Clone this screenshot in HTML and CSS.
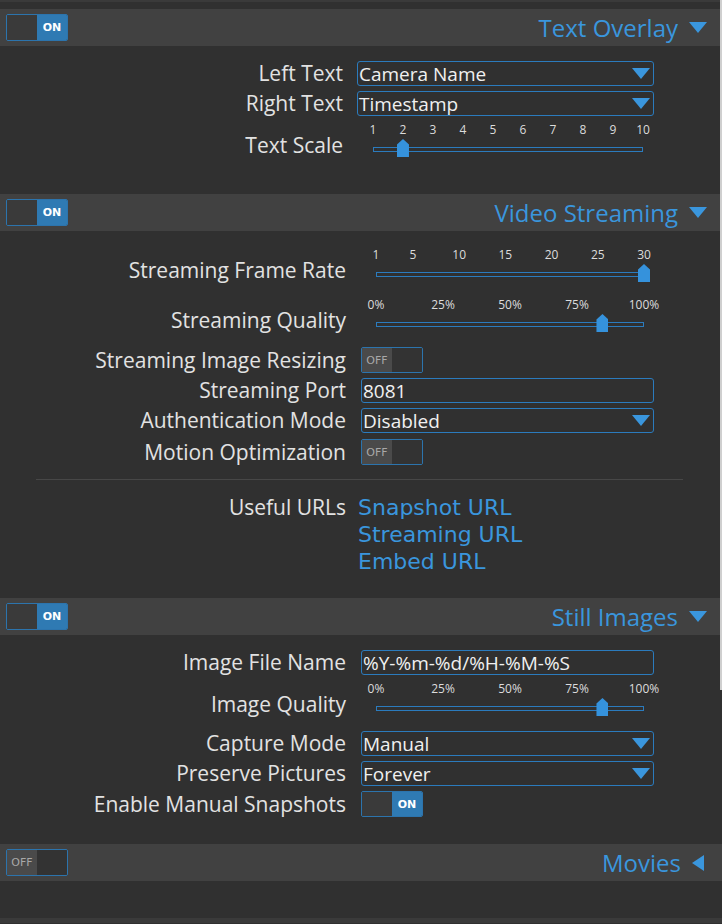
FILE: index.html
```html
<!DOCTYPE html>
<html>
<head>
<meta charset="utf-8">
<link rel="stylesheet" href="styles.css">
</head>
<body>
<div class="topline"></div>
<div class="gapline"></div>

<section class="sec">
  <div class="hdr">
    <div class="tog on big"><span class="a"></span><span class="b">ON</span></div>
    <div class="title">Text Overlay<span class="tri down"></span></div>
  </div>
  <div class="body b1">
    <div class="row"><div class="lbl">Left Text</div><div class="ctl"><div class="sel">Camera Name<span class="tri down sm"></span></div></div></div>
    <div class="row mt5"><div class="lbl">Right Text</div><div class="ctl"><div class="sel">Timestamp<span class="tri down sm"></span></div></div></div>
    <div class="row srow mt7"><div class="lbl">Text Scale</div><div class="ctl">
      <div class="slider s1">
        <span class="tick" style="left:0%">1</span>
        <span class="tick" style="left:11.11%">2</span>
        <span class="tick" style="left:22.22%">3</span>
        <span class="tick" style="left:33.33%">4</span>
        <span class="tick" style="left:44.44%">5</span>
        <span class="tick" style="left:55.56%">6</span>
        <span class="tick" style="left:66.67%">7</span>
        <span class="tick" style="left:77.78%">8</span>
        <span class="tick" style="left:88.89%">9</span>
        <span class="tick" style="left:100%">10</span>
        <div class="track"></div>
        <div class="handle" style="left:11.11%"></div>
      </div>
    </div></div>
  </div>
</section>

<section class="sec">
  <div class="hdr">
    <div class="tog on big"><span class="a"></span><span class="b">ON</span></div>
    <div class="title">Video Streaming<span class="tri down"></span></div>
  </div>
  <div class="body b2">
    <div class="row srow"><div class="lbl">Streaming Frame Rate</div><div class="ctl">
      <div class="slider">
        <span class="tick" style="left:0%">1</span>
        <span class="tick" style="left:13.79%">5</span>
        <span class="tick" style="left:31.03%">10</span>
        <span class="tick" style="left:48.28%">15</span>
        <span class="tick" style="left:65.52%">20</span>
        <span class="tick" style="left:82.76%">25</span>
        <span class="tick" style="left:100%">30</span>
        <div class="track"></div>
        <div class="handle" style="left:100%"></div>
      </div>
    </div></div>
    <div class="row srow mt14"><div class="lbl">Streaming Quality</div><div class="ctl">
      <div class="slider">
        <span class="tick" style="left:0%">0%</span>
        <span class="tick" style="left:25%">25%</span>
        <span class="tick" style="left:50%">50%</span>
        <span class="tick" style="left:75%">75%</span>
        <span class="tick" style="left:100%">100%</span>
        <div class="track"></div>
        <div class="handle" style="left:84.5%"></div>
      </div>
    </div></div>
    <div class="row mt13"><div class="lbl">Streaming Image Resizing</div><div class="ctl"><div class="tog off"><span class="a">OFF</span><span class="b"></span></div></div></div>
    <div class="row mt5"><div class="lbl">Streaming Port</div><div class="ctl"><div class="sel">8081</div></div></div>
    <div class="row mt5"><div class="lbl">Authentication Mode</div><div class="ctl"><div class="sel">Disabled<span class="tri down sm"></span></div></div></div>
    <div class="row mt6"><div class="lbl">Motion Optimization</div><div class="ctl"><div class="tog off"><span class="a">OFF</span><span class="b"></span></div></div></div>
    <div class="sep"></div>
    <div class="row urls"><div class="lbl">Useful URLs</div><div class="ctl links">
      <a>Snapshot URL</a>
      <a>Streaming URL</a>
      <a>Embed URL</a>
    </div></div>
  </div>
</section>

<section class="sec">
  <div class="hdr">
    <div class="tog on big"><span class="a"></span><span class="b">ON</span></div>
    <div class="title">Still Images<span class="tri down"></span></div>
  </div>
  <div class="body b3">
    <div class="row"><div class="lbl">Image File Name</div><div class="ctl"><div class="sel">%Y-%m-%d/%H-%M-%S</div></div></div>
    <div class="row srow mt7"><div class="lbl">Image Quality</div><div class="ctl">
      <div class="slider">
        <span class="tick" style="left:0%">0%</span>
        <span class="tick" style="left:25%">25%</span>
        <span class="tick" style="left:50%">50%</span>
        <span class="tick" style="left:75%">75%</span>
        <span class="tick" style="left:100%">100%</span>
        <div class="track"></div>
        <div class="handle" style="left:84.5%"></div>
      </div>
    </div></div>
    <div class="row mt13"><div class="lbl">Capture Mode</div><div class="ctl"><div class="sel">Manual<span class="tri down sm"></span></div></div></div>
    <div class="row mt5"><div class="lbl">Preserve Pictures</div><div class="ctl"><div class="sel">Forever<span class="tri down sm"></span></div></div></div>
    <div class="row mt5"><div class="lbl">Enable Manual Snapshots</div><div class="ctl"><div class="tog on"><span class="a"></span><span class="b">ON</span></div></div></div>
  </div>
</section>

<section class="sec">
  <div class="hdr">
    <div class="tog off big"><span class="a">OFF</span><span class="b"></span></div>
    <div class="title">Movies<span class="tri left"></span></div>
  </div>
</section>
<div class="bottomfill"></div>
<div class="bottomline"></div>
<div class="scrollmark"></div>
</body>
</html>
```
FILE: styles.css
```css
* { box-sizing: border-box; }
html, body { margin: 0; padding: 0; }
body {
  background: #303030;
  color: #e2e2e2;
  font-family: "Open Sans", "DejaVu Sans", sans-serif;
  font-size: 21px;
  width: 722px;
  height: 924px;
  overflow: hidden;
  position: relative;
}
.topline { height: 2px; background: #3a3a3a; }
.gapline { height: 7px; }
.hdr {
  height: 37px;
  background: #414141;
  display: flex;
  align-items: center;
  justify-content: space-between;
  padding: 0 15px 0 6px;
}
.title {
  color: #3a96dd;
  font-size: 24px;
  display: flex;
  align-items: center;
}
.tri { display: inline-block; width: 0; height: 0; }
.tri.down {
  border-left: 9px solid transparent;
  border-right: 9px solid transparent;
  border-top: 11px solid #3a96dd;
  margin-left: 11px;
}
.tri.left {
  border-top: 8px solid transparent;
  border-bottom: 8px solid transparent;
  border-right: 12px solid #3a96dd;
  margin-left: 11px;
  margin-right: 3px;
}
.tog {
  display: flex;
  width: 62px;
  height: 26px;
  border: 1px solid #2c74ad;
  border-radius: 2px;
  overflow: hidden;
}
.tog.big { height: 27px; }
.tog span {
  flex: 1;
  display: flex;
  align-items: center;
  justify-content: center;
  font-size: 11px;
  font-weight: 700;
  font-family: "DejaVu Sans", sans-serif;
}
.tog.on .a { background: #3a3a3a; }
.tog.on .b { background: #2f7ab3; color: #fff; }
.tog.off .a { background: #4a4a4a; color: #a8a8a8; font-weight: 400; }
.tog.off .b { background: #333333; }

.b1 { padding: 15px 0 35px; }
.b2 { padding: 17px 0 23px; }
.b3 { padding: 15px 0 27px; }
.row { display: flex; align-items: center; }
.lbl {
  width: 346px;
  text-align: right;
  white-space: nowrap;
  line-height: 25px;
}
.ctl { margin-left: 15px; width: 293px; }
.b1 .lbl { width: 343px; }
.b1 .ctl { margin-left: 14px; width: 297px; }
.mt5 { margin-top: 5px; }
.mt6 { margin-top: 6px; }
.mt7 { margin-top: 7px; }
.mt13 { margin-top: 13px; }
.mt14 { margin-top: 14px; }

.sel {
  height: 25px;
  border: 1px solid #2b7bbd;
  border-radius: 3px;
  display: flex;
  align-items: center;
  justify-content: space-between;
  padding: 0 3px 0 1px;
  color: #f0f0f0;
  font-size: 19px;
}
.tri.sm { margin-left: 0; }

.srow { align-items: flex-start; }
.srow .lbl { margin-top: 10px; }
.slider {
  position: relative;
  height: 36px;
  margin-left: 15px;
  width: 268px;
}
.slider.s1 { margin-left: 16px; width: 270px; }
.tick {
  position: absolute;
  top: 0;
  line-height: 14px;
  font-size: 12px;
  color: #dcdcdc;
  transform: translateX(-50%);
  white-space: nowrap;
}
.track {
  position: absolute;
  left: 0;
  right: 0;
  top: 24px;
  height: 5px;
  border: 1px solid #2b7bbd;
  background: #303030;
}
.handle {
  position: absolute;
  top: 16px;
  width: 12px;
  height: 18px;
  margin-left: -6px;
  background: #3592dc;
  clip-path: polygon(50% 0, 100% 30%, 100% 100%, 0 100%, 0 30%);
}
.sep {
  margin: 14px 39px 0 36px;
  height: 1px;
  background: #474747;
}
.urls { align-items: flex-start; margin-top: 14px; }
.urls .lbl { line-height: 27px; }
.links { display: flex; flex-direction: column; margin-left: 12px; }
.links a {
  color: #3a96dd;
  font-family: "DejaVu Sans", sans-serif;
  font-size: 22px;
  line-height: 27px;
  height: 27px;
}
.bottomfill { height: 37px; }
.bottomline { height: 5px; background: #3a3a3a; }
.scrollmark {
  position: absolute;
  right: 0;
  top: 0;
  width: 2px;
  height: 690px;
  background: #cfcfcf;
}
```
